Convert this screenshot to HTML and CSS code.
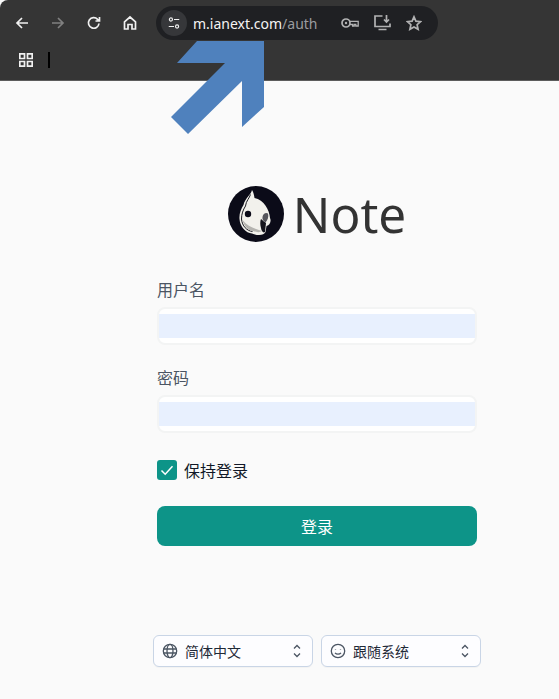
FILE: index.html
```html
<!DOCTYPE html>
<html lang="zh">
<head>
    <meta charset="UTF-8">
    <title>Note</title>
    <link rel="stylesheet" href="styles.css">
</head>
<body>
    <div class="browser">
        <div class="toolbar">
            <svg class="nav-icon" viewBox="0 0 16 16"><path d="M14 8H3M8 3 3 8l5 5" class="stroke"/></svg>
            <svg class="nav-icon dim" viewBox="0 0 16 16"><path d="M2 8h11M8 3l5 5-5 5" class="stroke"/></svg>
            <svg class="nav-icon" viewBox="0 0 16 16"><path d="M13 8.500A5.300 5.300 0 1 1 11.600 4.300L13.500 6M13.500 2v4h-4" class="stroke"/></svg>
            <svg class="nav-icon" viewBox="0 0 16 16"><path d="M2.500 14V6.800L8 2l5.500 4.800V14H10V9.500H6V14z" class="stroke"/></svg>
            <div class="omnibox">
                <span class="tune">
                    <svg viewBox="0 0 16 16"><circle cx="4.500" cy="4" r="1.800" class="stroke thin"/><path d="M8 4h6M2 12h6" class="stroke thin"/><circle cx="11.500" cy="12" r="1.800" class="stroke thin"/></svg>
                </span>
                <span class="url">m.ianext.com<span class="url-path">/auth</span></span>
                <svg class="omni-icon key" viewBox="0 0 18 12"><circle cx="5" cy="6" r="4" class="stroke"/><circle cx="5" cy="6" r="1.200" class="fill"/><path d="M9 4.300h8.200V9h-2.400V7.500h-1.600V9h-1.600V7.500H9" class="stroke thin"/></svg>
                <svg class="omni-icon screen" viewBox="0 0 17 16"><path d="M8.500 1H1v10.500h15V8.500M4.500 14.500h8" class="stroke"/><path d="M12.500 0v6.500M10 4.500l2.500 2.500L15 4.500" class="stroke"/></svg>
                <svg class="omni-icon" viewBox="0 0 16 16"><path d="m8 1.800 1.900 4.300 4.600.5-3.400 3.100 1 4.600L8 12l-4.100 2.300 1-4.600-3.400-3.100 4.600-.5z" class="stroke"/></svg>
            </div>
        </div>
        <div class="bookmarks">
            <svg class="apps" viewBox="0 0 14 14"><path d="M.8.8h4.700v4.700H.8zM8.500.8h4.700v4.700H8.500zM.8 8.500h4.700v4.700H.8zM8.500 8.500h4.700v4.700H8.500z" class="stroke"/></svg>
            <span class="redacted"></span>
        </div>
    </div>

    <!-- annotation drawn on top of the screenshot -->
    <svg class="arrow" viewBox="0 0 559 140"><path d="M197 41H264V107L242 127V81L188 134 171 117 225 63H177z"/></svg>

    <main class="page">
        <div class="brand">
            <svg class="logo" viewBox="0 0 56 56">
                <circle cx="28" cy="28" r="28" fill="#0b0b18"/>
                <!-- white outline of the bird -->
                <path d="M24 4C23 9 17 12 15.500 19 13 23 11 28 11.500 33 12 41 18 47 24 47.500 30 50 36 49.500 37.500 46L38.500 40C42 39 43.500 35 42 32 41.500 24 36 14 26.500 12 26 9 25.500 6 24 4z" fill="#f2f1ec"/>
                <!-- thin dark line inside the outline -->
                <path d="M22.500 8.500C21.500 12 18 15 17.500 20 15 24 13.500 28 13.500 33 14 40 19 45 24.500 45.500" fill="none" stroke="#1a1a22" stroke-width="1"/>
                <path d="M14.500 34C16 40 20 44.500 25 45 29 46.500 32 46.500 34 45 28 43 20 41 14.500 34z" fill="#b5b4b0"/>
                <circle cx="20" cy="28" r="3.200" fill="#0b0b18"/>
                <path d="M34.500 31C35 27.500 38 26 40 27.500 41 31 39.500 34 37.500 36.500 35.500 35 34 33.500 34.500 31z" fill="#55555c"/>
                <path d="M33 33C35 35 37 36 38 37L37 46C35 47.500 33.500 45 33 42 32 39 32 35 33 33z" fill="#14141c"/>
            </svg>
            <span class="brand-name">Note</span>
        </div>

        <form class="login">
            <label class="field-label">用户名</label>
            <div class="input"><span class="autofill"></span></div>

            <label class="field-label second">密码</label>
            <div class="input"><span class="autofill"></span></div>

            <div class="keep">
                <span class="checkbox">
                    <svg viewBox="0 0 20 20"><path d="m4.500 10.500 3.700 3.700 7.300-8"/></svg>
                </span>
                <span>保持登录</span>
            </div>

            <button type="button" class="submit">登录</button>
        </form>

        <div class="selects">
            <div class="select">
                <svg class="select-icon" viewBox="0 0 16 16"><circle cx="8" cy="8" r="6.700"/><ellipse cx="8" cy="8" rx="3" ry="6.700"/><path d="M1.500 6h13M1.500 10h13"/></svg>
                <span class="select-text">简体中文</span>
                <svg class="updown" viewBox="0 0 10 16"><path d="M2 5.500 5 2.500l3 3M2 10.500l3 3 3-3"/></svg>
            </div>
            <div class="select">
                <svg class="select-icon" viewBox="0 0 16 16"><circle cx="8" cy="8" r="6.700"/><path d="M5 9.800c1.500 1.800 4.500 1.800 6 0M5.500 6v.6M10.500 6v.6"/></svg>
                <span class="select-text">跟随系统</span>
                <svg class="updown" viewBox="0 0 10 16"><path d="M2 5.500 5 2.500l3 3M2 10.500l3 3 3-3"/></svg>
            </div>
        </div>
    </main>
</body>
</html>
```

FILE: styles.css
```css
html, body {
    margin: 0;
    height: 699px;
    overflow: hidden;
    background: #fafafa;
    font-family: "Noto Sans", "Noto Sans CJK SC", sans-serif;
}

/* browser chrome */
.browser {
    height: 80px;
    background: #353535;
    border-bottom: 1px solid #5c5c5c;
    border-top-left-radius: 8px;
}
.toolbar {
    display: flex;
    align-items: center;
    height: 46px;
    padding-left: 14px;
}
.nav-icon {
    width: 16px;
    height: 16px;
    margin-right: 20px;
    flex: none;
}
.nav-icon.dim {
    opacity: .4;
}
.stroke {
    fill: none;
    stroke: #f1f1f1;
    stroke-width: 1.700;
}
.stroke.thin {
    stroke-width: 1.300;
}
.fill {
    fill: #f1f1f1;
}
.omnibox {
    display: flex;
    align-items: center;
    width: 282px;
    height: 34px;
    margin-left: -2px;
    background: #1f2023;
    border-radius: 17px;
}
.tune {
    display: flex;
    align-items: center;
    justify-content: center;
    width: 26px;
    height: 26px;
    margin-left: 5px;
    background: #36373a;
    border-radius: 50%;
}
.tune svg {
    width: 14px;
    height: 14px;
}
.url {
    width: 148px;
    margin-left: 6px;
    font-size: 14px;
    color: #f4f4f4;
    white-space: nowrap;
}
.url-path {
    color: #9a9c9f;
}
.omni-icon {
    width: 16px;
    height: 16px;
    margin-right: 16px;
    opacity: .7;
}
.omni-icon.key {
    width: 18px;
    height: 12px;
    margin-right: 15px;
}
.omni-icon.screen {
    width: 17px;
    margin-right: 15px;
}
.bookmarks {
    display: flex;
    align-items: center;
    height: 28px;
    padding-left: 19px;
}
.apps {
    width: 14px;
    height: 14px;
}
.redacted {
    width: 2px;
    height: 16px;
    margin-left: 15px;
    background: #000;
}
.arrow {
    position: absolute;
    top: 0;
    left: 0;
    width: 559px;
    height: 140px;
}
.arrow path {
    fill: #4f81bd;
}

/* page, centred on 317px as the form sits right of the window middle */
.page {
    display: flex;
    flex-direction: column;
    align-items: center;
    padding-left: 75px;
}
.brand {
    display: flex;
    align-items: center;
    gap: 9px;
    height: 56px;
    margin-top: 105px;
}
.logo {
    width: 56px;
    height: 56px;
}
.brand-name {
    font-size: 49.5px;
    color: #333;
    line-height: 56px;
}
.login {
    width: 320px;
    margin-top: 38px;
}
.field-label {
    display: block;
    height: 21px;
    margin-bottom: 6px;
    font-size: 16px;
    line-height: 21px;
    color: #4b5563;
}
.field-label.second {
    margin-top: 23px;
}
.input {
    display: flex;
    align-items: center;
    box-sizing: border-box;
    height: 38px;
    background: #fff;
    border: 2px solid #f3f4f4;
    border-radius: 8px;
}
.autofill {
    display: block;
    width: 100%;
    height: 24px;
    background: #e8f0fe;
}
.keep {
    display: flex;
    align-items: center;
    gap: 7px;
    height: 20px;
    margin-top: 27px;
    font-size: 16px;
    color: #111827;
}
.checkbox {
    width: 20px;
    height: 20px;
    background: #0d9488;
    border-radius: 3px;
}
.checkbox svg {
    display: block;
    width: 20px;
    height: 20px;
    fill: none;
    stroke: #fff;
    stroke-width: 1.500;
}
.submit {
    display: block;
    width: 100%;
    height: 40px;
    margin-top: 26px;
    padding: 0;
    border: 0;
    border-radius: 8px;
    background: #0d9488;
    color: #fff;
    font-family: inherit;
    font-size: 16px;
}
.selects {
    display: flex;
    gap: 8px;
    margin-top: 89px;
}
.select {
    display: flex;
    align-items: center;
    box-sizing: border-box;
    width: 160px;
    height: 32px;
    padding: 0 10px 0 8px;
    background: #fdfdff;
    border: 1px solid #c9d5e6;
    border-radius: 6px;
    box-shadow: 0 1px 1px rgba(0, 0, 0, .03);
}
.select-icon {
    width: 16px;
    height: 16px;
    fill: none;
    stroke: #4b5563;
    stroke-width: 1.300;
}
.select-text {
    flex: 1;
    margin-left: 7px;
    font-size: 14px;
    color: #1f2937;
}
.updown {
    width: 10px;
    height: 16px;
    fill: none;
    stroke: #4b5563;
    stroke-width: 1.300;
}
```
